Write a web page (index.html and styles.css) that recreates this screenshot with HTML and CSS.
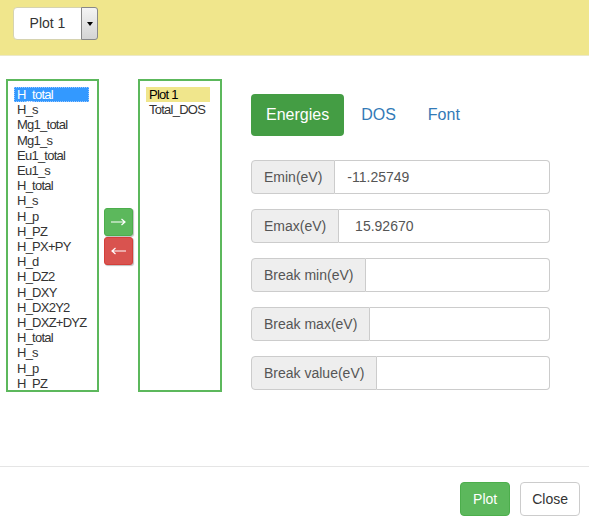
FILE: index.html
```html
<!DOCTYPE html>
<html>
<head>
<meta charset="utf-8">
<link rel="stylesheet" href="styles.css">
</head>
<body>
<div class="header">
  <div class="plot-select">
    <span class="plot-select-value">Plot 1</span>
    <span class="plot-select-btn"><span class="caret"></span></span>
  </div>
</div>
<div class="main">
  <div class="listbox listbox-left">
    <div class="opt opt-selected">H_total</div>
    <div class="opt">H_s</div>
    <div class="opt">Mg1_total</div>
    <div class="opt">Mg1_s</div>
    <div class="opt">Eu1_total</div>
    <div class="opt">Eu1_s</div>
    <div class="opt">H_total</div>
    <div class="opt">H_s</div>
    <div class="opt">H_p</div>
    <div class="opt">H_PZ</div>
    <div class="opt">H_PX+PY</div>
    <div class="opt">H_d</div>
    <div class="opt">H_DZ2</div>
    <div class="opt">H_DXY</div>
    <div class="opt">H_DX2Y2</div>
    <div class="opt">H_DXZ+DYZ</div>
    <div class="opt">H_total</div>
    <div class="opt">H_s</div>
    <div class="opt">H_p</div>
    <div class="opt">H_PZ</div>
  </div>
  <div class="move-btns">
    <div class="mbtn mbtn-add">
      <svg width="15" height="8" viewBox="0 0 15 8"><path d="M0 4H14M10.5 1L14 4L10.5 7" fill="none" stroke="#fff" stroke-width="1.2"/></svg>
    </div>
    <div class="mbtn mbtn-remove">
      <svg width="15" height="8" viewBox="0 0 15 8"><path d="M15 4H1M4.5 1L1 4L4.5 7" fill="none" stroke="#fff" stroke-width="1.2"/></svg>
    </div>
  </div>
  <div class="listbox listbox-right">
    <div class="opt opt-plot">Plot 1</div>
    <div class="opt">Total_DOS</div>
  </div>
  <div class="panel">
    <div class="pills">
      <div class="pill pill-active">Energies</div>
      <div class="pill">DOS</div>
      <div class="pill">Font</div>
    </div>
    <div class="fields">
      <div class="igroup"><span class="addon">Emin(eV)</span><span class="ifield">-11.25749</span></div>
      <div class="igroup"><span class="addon">Emax(eV)</span><span class="ifield">&nbsp;15.92670</span></div>
      <div class="igroup"><span class="addon">Break min(eV)</span><span class="ifield"></span></div>
      <div class="igroup"><span class="addon">Break max(eV)</span><span class="ifield"></span></div>
      <div class="igroup"><span class="addon">Break value(eV)</span><span class="ifield"></span></div>
    </div>
  </div>
</div>
<div class="footer">
  <div class="btn btn-plot">Plot</div>
  <div class="btn btn-close">Close</div>
</div>
</body>
</html>
```
FILE: styles.css
```css
* { box-sizing: border-box; }
html, body { margin: 0; padding: 0; }
body {
  width: 589px;
  height: 526px;
  font-family: "Liberation Sans", Arial, sans-serif;
  color: #333;
  background: #fff;
  display: flex;
  flex-direction: column;
  overflow: hidden;
}
.header {
  height: 56px;
  background: #f0e68c;
  border-bottom: 1px solid #ece9c8;
  padding: 7px 0 0 13px;
  flex: none;
}
.plot-select {
  display: flex;
  width: 85px;
  height: 33px;
  background: #fff;
  border: 1px solid #d6d3b0;
  border-radius: 4px;
}
.plot-select-value {
  flex: 1;
  font-size: 14px;
  line-height: 31px;
  text-align: center;
  color: #333;
}
.plot-select-btn {
  width: 17px;
  height: 33px;
  margin-top: -1px;
  margin-right: -1px;
  border: 1px solid #888;
  border-radius: 0 3px 3px 0;
  background: linear-gradient(#f4f4f4, #d4d4d4);
  display: flex;
  align-items: center;
  justify-content: center;
}
.caret {
  width: 0;
  height: 0;
  border-left: 3px solid transparent;
  border-right: 3px solid transparent;
  border-top: 4px solid #000;
}
.main {
  flex: 1;
  display: flex;
  align-items: flex-start;
  padding: 23px 0 0 6px;
}
.listbox {
  height: 313px;
  border: 2px solid #5cb85c;
  overflow: hidden;
  font-size: 13px;
  letter-spacing: -0.75px;
  line-height: 15.2px;
  padding-top: 6px;
  background: #fff;
}
.listbox-left {
  width: 93px;
  padding-left: 6px;
}
.listbox-right {
  width: 84px;
  padding-left: 6px;
  margin-left: 5px;
}
.opt {
  padding-left: 3px;
  white-space: nowrap;
  color: #333;
}
.opt-selected {
  width: 75px;
  background: #3399ff;
  color: #fff;
  outline: 1px dotted #9cc8ff;
  outline-offset: -1px;
}
.opt-plot {
  width: 64px;
  background: #f0e68c;
  color: #000;
}
.move-btns {
  margin-left: 5px;
  margin-top: 129px;
  display: flex;
  flex-direction: column;
  gap: 1px;
}
.mbtn {
  width: 29px;
  height: 28px;
  border-radius: 3px;
  display: flex;
  align-items: center;
  justify-content: center;
}
.mbtn-add {
  background: #5cb85c;
  border: 1px solid #4cae4c;
  box-shadow: 1px 1px 1px rgba(0,0,0,0.25);
}
.mbtn-remove {
  background: #d9534f;
  border: 1px solid #d43f3a;
  box-shadow: 1px 1px 1px rgba(0,0,0,0.25);
}
.panel {
  margin-left: 29px;
  width: 299px;
  padding-top: 15px;
}
.pills {
  display: flex;
  gap: 2px;
}
.pill {
  font-size: 16px;
  line-height: 22px;
  padding: 10px 15px;
  border-radius: 4px;
  color: #337ab7;
}
.pill-active {
  background: #449d44;
  color: #fff;
}
.fields {
  margin-top: 24px;
  display: flex;
  flex-direction: column;
  gap: 15px;
}
.igroup {
  display: flex;
  height: 34px;
  font-size: 14px;
  color: #555;
}
.addon {
  background: #eee;
  border: 1px solid #ccc;
  border-radius: 4px 0 0 4px;
  padding: 0 12px;
  line-height: 32px;
  white-space: nowrap;
}
.ifield {
  flex: 1;
  border: 1px solid #ccc;
  border-left: 0;
  border-radius: 0 4px 4px 0;
  padding: 0 12px;
  line-height: 32px;
  color: #555;
  white-space: pre;
}
.footer {
  flex: none;
  height: 60px;
  border-top: 1px solid #e5e5e5;
  display: flex;
  justify-content: flex-end;
  align-items: flex-start;
  padding: 15px 9px 0 0;
  gap: 10px;
}
.btn {
  font-size: 14px;
  line-height: 20px;
  padding: 6px 12px;
  border-radius: 4px;
  height: 34px;
}
.btn-plot {
  background: #5cb85c;
  border: 1px solid #4cae4c;
  color: #fff;
}
.btn-close {
  background: #fff;
  border: 1px solid #ccc;
  color: #333;
  padding: 6px 11px;
}
```
